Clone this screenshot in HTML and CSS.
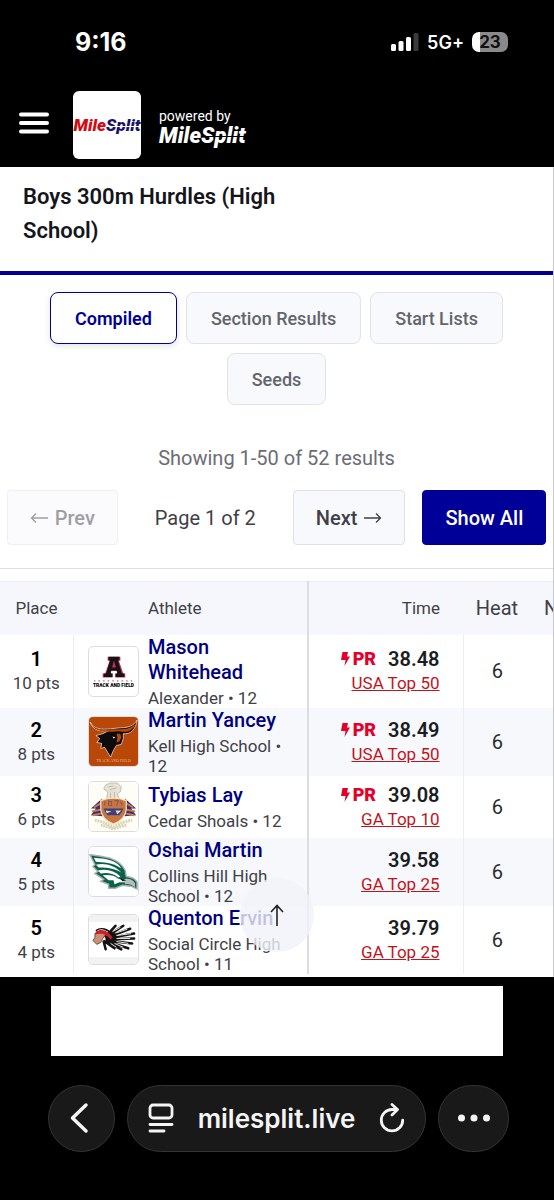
FILE: index.html
```
<!DOCTYPE html>
<html lang="en">
<head>
    <meta charset="UTF-8">
    <meta name="viewport" content="width=device-width, initial-scale=1">
    <title>Boys 300m Hurdles (High School)</title>
    <link rel="stylesheet" href="styles.css">
</head>
<body>
    <div class="status-bar">
        <span class="clock">9:16</span>
        <div class="status-icons">
            <svg class="signal" width="28" height="18" viewBox="0 0 28 18">
                <rect x="0" y="11" width="5" height="7" rx="1.5" fill="#fff"/>
                <rect x="7.5" y="8" width="5" height="10" rx="1.5" fill="#fff"/>
                <rect x="15" y="4" width="5" height="14" rx="1.5" fill="#fff"/>
                <rect x="22.5" y="0" width="5" height="18" rx="1.5" fill="#3a3a3a"/>
            </svg>
            <span class="network">5G+</span>
            <span class="battery">23</span>
        </div>
    </div>

    <header class="site-header">
        <button class="menu-btn" aria-label="Menu">
            <svg width="30" height="24" viewBox="0 0 30 24" stroke="#fff" stroke-width="4" stroke-linecap="round">
                <path d="M2 3.500h26M2 12h26M2 20.500h26"/>
            </svg>
        </button>
        <a href="#" class="site-tile"><span class="wordmark wordmark-small"><span class="mile">Mile</span><span class="split">Split</span></span></a>
        <div class="powered">
            <span class="powered-label">powered by</span>
            <span class="wordmark wordmark-large"><span>Mile</span><span class="split">Split</span></span>
        </div>
    </header>

    <main class="page">
        <div class="event-title">
            <h1>Boys 300m Hurdles (High School)</h1>
        </div>

        <nav class="tabs">
            <button class="tab active">Compiled</button>
            <button class="tab">Section Results</button>
            <button class="tab">Start Lists</button>
            <button class="tab">Seeds</button>
        </nav>

        <section class="pagination">
            <p class="showing">Showing 1-50 of 52 results</p>
            <div class="pager">
                <button class="page-btn" disabled>
                    <svg width="19" height="12" viewBox="0 0 19 12" fill="none" stroke="currentColor" stroke-width="1.300"><path d="M18 6H1.500M6 1.500L1.500 6L6 10.500"/></svg>
                    Prev
                </button>
                <span class="page-count">Page 1 of 2</span>
                <button class="page-btn">
                    Next
                    <svg width="19" height="12" viewBox="0 0 19 12" fill="none" stroke="currentColor" stroke-width="1.300"><path d="M1 6H17.500M13 1.500L17.500 6L13 10.500"/></svg>
                </button>
                <button class="page-btn show-all">Show All</button>
            </div>
        </section>

        <div class="results-wrap">
            <table class="results">
                <colgroup>
                    <col class="col-place">
                    <col class="col-logo">
                    <col class="col-athlete">
                    <col class="col-time">
                    <col class="col-heat">
                    <col class="col-notes">
                </colgroup>
                <thead>
                    <tr>
                        <th class="place">Place</th>
                        <th></th>
                        <th class="athlete">Athlete</th>
                        <th class="time">Time</th>
                        <th class="heat">Heat</th>
                        <th class="notes">N</th>
                    </tr>
                </thead>
                <tbody>
                    <tr>
                        <td class="place"><b>1</b><span>10 pts</span></td>
                        <td class="logo">
                            <svg class="team-logo" viewBox="0 0 50 50">
                                <path d="M19 10h13v4h-1.500l4.500 13h2v4H27v-4h2l-.7-2.500h-5.600L22 27h2v4H14v-4h2.500l4.500-13h-2z" fill="#c9304a"/>
                                <path d="M20 10h11v3.500h-1.500l4 13.500H36v3.500h-9V27h2l-.8-3h-5.400L22 27h2v3.500h-9V27h2.500l4-13.500H20zM25.500 14l-2 7h4z" fill="#15131a"/>
                                <path d="M5 34.500h41" stroke="#d0627a" stroke-width="1.200" stroke-dasharray="1.500 3.200"/>
                                <text x="25" y="41" text-anchor="middle" class="logo-caption">TRACK AND FIELD</text>
                            </svg>
                        </td>
                        <td class="athlete"><a href="#">Mason Whitehead</a><span>Alexander • 12</span></td>
                        <td class="time">
                            <div class="mark"><span class="pr"><svg width="9" height="14" viewBox="0 0 9 14"><path d="M1.500 0h5.500L6 4.500h3L3.500 14L4.500 8H0z" fill="#e4002b"/></svg>PR</span><b>38.48</b></div>
                            <a href="#">USA Top 50</a>
                        </td>
                        <td class="heat">6</td>
                        <td></td>
                    </tr>
                    <tr>
                        <td class="place"><b>2</b><span>8 pts</span></td>
                        <td class="logo">
                            <svg class="team-logo" viewBox="0 0 50 50">
                                <rect width="50" height="50" fill="#b84708"/>
                                <path d="M1 5C4 14 12 15 20 14L14 17L7 19L11 22L8 26L13 27L12 32L16 31L19 36L22 41L25 34L28 29L33 28L35 22L35 17C42 18 48 13 49 3C46 9 40 11 32 11L22 12C14 13 5 13 1 5z" fill="#0d0b0b" stroke="#f1d9c8" stroke-width=".8"/>
                                <path d="M4 9C9 14 16 13.500 24 12.500L31 12.500C38 12.500 44 11 48 6C46 13 40 15.500 34 15L30 14.500L24 15C16 15.500 8 14.500 4 9z" fill="#b84708"/>
                                <path d="M28 17L32 17L33 21L31 25L28 26L29 21z" fill="#b84708"/>
                                <path d="M24 20l3 1-2 1z" fill="#fff"/>
                                <text x="25" y="46" text-anchor="middle" class="logo-caption-serif">TRACK AND FIELD</text>
                            </svg>
                        </td>
                        <td class="athlete"><a href="#">Martin Yancey</a><span>Kell High School • 12</span></td>
                        <td class="time">
                            <div class="mark"><span class="pr"><svg width="9" height="14" viewBox="0 0 9 14"><path d="M1.500 0h5.500L6 4.500h3L3.500 14L4.500 8H0z" fill="#e4002b"/></svg>PR</span><b>38.49</b></div>
                            <a href="#">USA Top 50</a>
                        </td>
                        <td class="heat">6</td>
                        <td></td>
                    </tr>
                    <tr>
                        <td class="place"><b>3</b><span>6 pts</span></td>
                        <td class="logo">
                            <svg class="team-logo" viewBox="0 0 50 50">
                                <rect width="50" height="50" fill="#fffef6"/>
                                <path d="M13 17L2 27L7 27L2 34L14 35zM37 17L48 27L43 27L48 34L36 35z" fill="#36317c"/>
                                <path d="M5 26L13 21M3 30L13 28M4 34L13 32M45 26L37 21M47 30L37 28M46 34L37 32" stroke="#d07a45" stroke-width="2"/>
                                <path d="M17 3L22 1H29L33 5L32 10L29 12L31 18H18L19 10L15 7z" fill="#e6e2d5" stroke="#b9b29d" stroke-width=".8"/>
                                <path d="M20 5l5-1M21 8l7-2M22 11v5M26 10v7" stroke="#bdb7a8" stroke-width="1"/>
                                <path d="M12 19Q25 14 38 19V28Q37 38 25 43Q13 38 12 28z" fill="#c8743f" stroke="#ede2c0" stroke-width="1.300"/>
                                <path d="M15 27H35Q34 31 31 34H19Q16 31 15 27z" fill="#3d407f"/>
                                <path d="M17 29l6 1-5 2zM27 29l6 0-4 4z" fill="#e7dcc0"/>
                                <path d="M16 20v4M20 19v5h3v-4h-3M26 19h4l-2 5M32 20l2 4" fill="none" stroke="#8d5a50" stroke-width="1.200"/>
                                <path d="M6 39Q14 40 25 46Q36 40 44 39M12 44Q18 45 25 48Q33 45 38 44" fill="none" stroke="#d9d3b4" stroke-width="3" stroke-dasharray="2 .8"/>
                            </svg>
                        </td>
                        <td class="athlete"><a href="#">Tybias Lay</a><span>Cedar Shoals • 12</span></td>
                        <td class="time">
                            <div class="mark"><span class="pr"><svg width="9" height="14" viewBox="0 0 9 14"><path d="M1.500 0h5.500L6 4.500h3L3.500 14L4.500 8H0z" fill="#e4002b"/></svg>PR</span><b>39.08</b></div>
                            <a href="#">GA Top 10</a>
                        </td>
                        <td class="heat">6</td>
                        <td></td>
                    </tr>
                    <tr>
                        <td class="place"><b>4</b><span>5 pts</span></td>
                        <td class="logo">
                            <svg class="team-logo" viewBox="0 0 50 50">
                                <rect width="50" height="50" fill="#fff"/>
                                <path d="M1 8C14 10 30 10 37 24L38 30Q47 31 49 36V43L43 40L34 39L27 42L20 42L20 38L12 35L15 33L6 27L9 25L4 20L6 18z" fill="#0b6249" stroke="#a9b0b2" stroke-width="1.500"/>
                                <path d="M5 11C17 12 28 13 33 22C24 15 14 16 7 15zM7 18C17 16 26 19 33 26C24 21 15 21 10 21zM9 24C18 22 26 24 32 30L30 31C24 26 17 26 12 27zM14 29C20 28 26 29 29 32L34 34L38 36L31 36L26 38L25 34L20 34z" fill="#fff"/>
                                <path d="M35 33Q43 31 47 37V41Q42 37 37 38z" fill="#b6bdbe"/>
                                <path d="M32 32l6 2-4 1z" fill="#111"/>
                            </svg>
                        </td>
                        <td class="athlete"><a href="#">Oshai Martin</a><span>Collins Hill High School • 12</span></td>
                        <td class="time">
                            <div class="mark"><b>39.58</b></div>
                            <a href="#">GA Top 25</a>
                        </td>
                        <td class="heat">6</td>
                        <td></td>
                    </tr>
                    <tr>
                        <td class="place"><b>5</b><span>4 pts</span></td>
                        <td class="logo">
                            <svg class="team-logo" viewBox="0 0 50 50">
                                <rect width="50" height="50" fill="#f2f2f2"/>
                                <rect y="7" width="50" height="36" fill="#fff"/>
                                <path d="M17 22L27 11M18 22L35 11M18 23L42 14M18 24L46 19M18 25L46 24M18 26L44 29M18 27L40 34M17 27L33 35M16 27L26 34M15 27L17 35" stroke="#161313" stroke-width="2.600" stroke-linecap="round"/>
                                <path d="M24 17L32 12.500M27 18.500L39 14.500M28 21L43 19M28 24L42 24M28 27L40 29M26 29L35 33M22 29L28 33" stroke="#fff" stroke-width=".9"/>
                                <path d="M6 19L13 17L17 20L14 24L12 28L8 30L6 28L4 26L6 23z" fill="#c99073" stroke="#3a2520" stroke-width=".7"/>
                                <path d="M7 17C14 13 20 17 24 23L22 25C18 20 13 18 6 20z" fill="#c9202c"/>
                                <path d="M7 16C12 12 19 14 24 20" fill="none" stroke="#161313" stroke-width="1.500"/>
                            </svg>
                        </td>
                        <td class="athlete"><a href="#">Quenton Ervin</a><span>Social Circle High School • 11</span></td>
                        <td class="time">
                            <div class="mark"><b>39.79</b></div>
                            <a href="#">GA Top 25</a>
                        </td>
                        <td class="heat">6</td>
                        <td></td>
                    </tr>
                </tbody>
            </table>
        </div>

        <button class="back-to-top" aria-label="Back to top">
            <svg width="14" height="22" viewBox="0 0 14 22" fill="none" stroke="#222" stroke-width="1.600"><path d="M7 22V2M1 8L7 1.500L13 8"/></svg>
        </button>
    </main>

    <footer class="bottom">
        <div class="ad"></div>
        <div class="browser-bar">
            <button class="round-btn" aria-label="Back">
                <svg width="24" height="32" viewBox="0 0 24 32" fill="none" stroke="#f5f5f5" stroke-width="3.500" stroke-linecap="round" stroke-linejoin="round"><path d="M16 3L2.500 16L16 29"/></svg>
            </button>
            <div class="address">
                <button aria-label="Page settings">
                    <svg width="26" height="30" viewBox="0 0 26 30" fill="none" stroke="#f5f5f5" stroke-width="2.800" stroke-linecap="round"><rect x="2" y="2" width="22" height="13" rx="3"/><path d="M2 21.500h22M2 28h14"/></svg>
                </button>
                <span class="domain">milesplit.live</span>
                <button aria-label="Reload">
                    <svg width="26" height="30" viewBox="0 0 26 30" fill="none" stroke="#f5f5f5" stroke-width="2.800" stroke-linecap="round" stroke-linejoin="round"><path d="M18 6.500H13A10.700 10.700 0 1 0 23.700 17.200M13 1.500L18.500 6.500L13 12"/></svg>
                </button>
            </div>
            <button class="round-btn more" aria-label="More">
                <svg width="32" height="8" viewBox="0 0 32 8" fill="#f5f5f5"><circle cx="3.500" cy="4" r="3.500"/><circle cx="16" cy="4" r="3.500"/><circle cx="28.500" cy="4" r="3.500"/></svg>
            </button>
        </div>
    </footer>
</body>
</html>
```

FILE: styles.css
```
* {
    margin: 0;
    padding: 0;
    box-sizing: border-box;
}

body {
    background: #000;
    color: #3f4147;
    font-family: Roboto, sans-serif;
    font-size: 20px;
}

button {
    border: 0;
    background: none;
    color: inherit;
    font: inherit;
}

svg {
    display: block;
}

/* phone status bar */
.status-bar {
    display: flex;
    align-items: center;
    justify-content: space-between;
    height: 84px;
    padding: 0 46px 0 75px;
    color: #fff;
    font-family: Inter, sans-serif;
}

.clock {
    font-size: 25px;
    font-weight: 700;
}

.status-icons {
    display: flex;
    align-items: center;
    gap: 8px;
}

.network {
    font-size: 18px;
    font-weight: 600;
}

.battery {
    width: 36px;
    height: 20px;
    border-radius: 7px;
    background: linear-gradient(90deg, #fff 23%, #8a8a8a 23%);
    color: #111;
    font-size: 17px;
    font-weight: 700;
    line-height: 20px;
    text-align: center;
}

/* site header */
.site-header {
    display: flex;
    align-items: center;
    height: 83px;
    padding: 0 19px 2px;
    color: #fff;
}

.menu-btn {
    padding-bottom: 4px;
}

.site-tile {
    display: flex;
    align-items: center;
    justify-content: center;
    width: 68px;
    height: 68px;
    margin: 0 18px 0 24px;
    border-radius: 6px;
    background: #fff;
    text-decoration: none;
}

.powered {
    display: flex;
    flex-direction: column;
    align-items: flex-start;
    padding-top: 4px;
}

.powered-label {
    font-size: 14px;
    line-height: 18px;
}

.wordmark {
    font-style: italic;
    font-weight: 900;
}

.wordmark-small {
    font-size: 17px;
    line-height: 18px;
}

.wordmark-large {
    font-size: 22px;
    line-height: 22px;
}

.wordmark-small .mile {
    color: #d40a12;
}

.wordmark-small .split {
    color: #1b1464;
}

.split {
    position: relative;
}

/* the slit through the second half of the wordmark */
.split::after {
    content: '';
    position: absolute;
    left: 0;
    right: 0;
    top: 55%;
    height: 1px;
    background: #000;
}

.wordmark-small .split::after {
    background: #fff;
}

/* page */
.page {
    position: relative;
    padding-bottom: 3px;
    border-right: 1px solid #c8c8cc;
    background: #fff;
}

.event-title {
    padding: 13px 23px 23px;
    border-bottom: 4px solid #000099;
}

.event-title h1 {
    max-width: 60%;
    color: #14161c;
    font-size: 22px;
    font-weight: 600;
    line-height: 34px;
}

.tabs {
    display: flex;
    flex-wrap: wrap;
    justify-content: center;
    gap: 9px;
    padding: 17px 6px 0;
}

.tab {
    height: 52px;
    padding: 0 24px;
    border: 1px solid #e2e3e8;
    border-radius: 8px;
    background: #f8f9fd;
    color: #62656c;
    font-size: 18px;
    font-weight: 500;
}

.tab.active {
    border-color: #000099;
    background: #fff;
    box-shadow: 0 2px 6px rgba(0, 0, 0, 0.12);
    color: #000099;
    font-weight: 600;
}

.pagination {
    padding: 39px 0 23px;
    border-bottom: 1px solid #dfe0e4;
}

.showing {
    color: #6a6d75;
    line-height: 28px;
    text-align: center;
}

.pager {
    display: flex;
    align-items: center;
    justify-content: center;
    gap: 17px;
    margin-top: 18px;
}

.page-btn {
    display: flex;
    align-items: center;
    gap: 6px;
    height: 55px;
    padding: 0 22px;
    border: 1px solid #e0e1e6;
    border-radius: 4px;
    background: #f8f9fd;
    font-weight: 500;
}

.page-btn:disabled {
    opacity: 0.5;
}

.page-btn.show-all {
    border-color: #000099;
    background: #000099;
    color: #fff;
}

.page-count {
    padding: 0 20px;
}

/* results table */
.results-wrap {
    margin-top: 12px;
    overflow: hidden;
}

.results {
    width: 640px;
    border-collapse: collapse;
    table-layout: fixed;
}

.col-place {
    width: 73px;
}

.col-logo {
    width: 65px;
}

.col-athlete {
    width: 170px;
}

.col-time {
    width: 155px;
}

.col-heat {
    width: 68px;
}

.results th {
    height: 53px;
    border-top: 1px solid #ececf1;
    background: #f6f7fc;
    font-size: 17px;
    font-weight: 400;
}

.results td {
    height: 62px;
}

.results tbody tr:nth-child(even) {
    background: #f7f8fc;
}

.results .place {
    text-align: center;
}

.place b,
.place span {
    display: block;
    line-height: 24px;
}

.place b {
    color: #000;
    font-weight: 600;
}

.place span {
    font-size: 17px;
}

td.place {
    border-right: 1px solid #ededf2;
}

.team-logo {
    width: 51px;
    height: 51px;
    margin-left: 14px;
    border: 1px solid #dcdde1;
    border-radius: 5px;
}

.logo-caption {
    font-family: Roboto, sans-serif;
    font-size: 5px;
    font-weight: 900;
}

.logo-caption-serif {
    fill: #e8b48e;
    font-family: "Liberation Serif", serif;
    font-size: 4px;
}

.results .athlete {
    padding: 0 16px 0 10px;
    border-right: 2px solid #dcdde3;
    text-align: left;
}

.athlete a {
    display: block;
    color: #000080;
    font-weight: 500;
    line-height: 25px;
    text-decoration: none;
}

.athlete span {
    display: block;
    margin-top: 3px;
    font-size: 17px;
    line-height: 20px;
}

.results .time {
    padding-right: 23px;
    text-align: right;
}

td.time {
    border-right: 1px solid #ededf2;
}

.mark {
    display: flex;
    align-items: center;
    justify-content: flex-end;
    gap: 12px;
    color: #1b1d22;
    line-height: 24px;
}

.mark b {
    font-weight: 600;
}

.pr {
    display: flex;
    align-items: center;
    gap: 3px;
    color: #e4002b;
    font-size: 18px;
    font-weight: 900;
}

.time a {
    display: block;
    color: #c0141c;
    font-size: 17px;
    line-height: 24px;
}

.results .heat {
    text-align: center;
}

.results th.heat,
.results th.notes {
    font-size: 20px;
}

td.heat {
    color: #2a2c31;
}

.results th.notes {
    padding-left: 13px;
    text-align: left;
}

.back-to-top {
    position: absolute;
    bottom: 25px;
    left: 50%;
    display: flex;
    align-items: center;
    justify-content: center;
    width: 74px;
    height: 74px;
    border-radius: 50%;
    background: rgba(241, 242, 249, 0.8);
    transform: translateX(-50%);
}

/* ad and browser controls */
.bottom {
    padding: 9px 0 48px;
}

.ad {
    height: 70px;
    margin: 0 51px;
    background: #fff;
}

.browser-bar {
    display: flex;
    gap: 12px;
    margin-top: 29px;
    padding: 0 45px 0 48px;
}

.round-btn,
.address {
    display: flex;
    align-items: center;
    justify-content: center;
    height: 67px;
    border: 1px solid #343434;
    border-radius: 34px;
    background: #191919;
}

.round-btn {
    width: 67px;
}

.round-btn.more {
    width: 71px;
}

.address {
    flex: 1;
    justify-content: space-between;
    padding: 0 20px;
}

.domain {
    color: #f5f5f5;
    font-family: Inter, sans-serif;
    font-size: 26px;
    font-weight: 600;
}
```
